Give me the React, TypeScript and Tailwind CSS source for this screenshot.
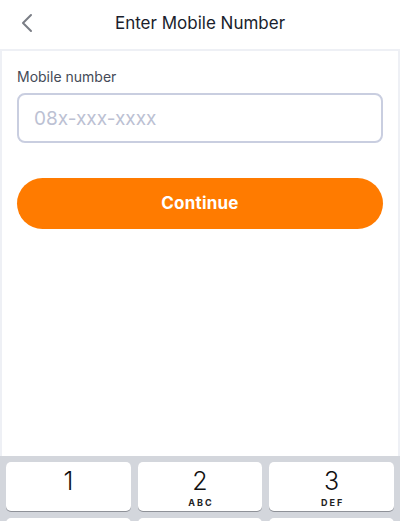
import React from "react";

const keys = [
  { d: "1", l: "" },
  { d: "2", l: "ABC" },
  { d: "3", l: "DEF" },
];

export default function App() {
  return (
    <div
      className="w-[400px] h-[521px] bg-white flex flex-col overflow-hidden"
      style={{ fontFamily: "Inter, 'Noto Sans', sans-serif" }}
    >
      <div className="h-[49px] shrink-0 relative flex items-center justify-center">
        <svg
          className="absolute left-[20px] top-[13px]"
          width="14"
          height="20"
          viewBox="0 0 14 20"
          fill="none"
        >
          <path d="M11 2 L3 10 L11 18" stroke="#7a7d85" strokeWidth="2" strokeLinecap="round" strokeLinejoin="round" />
        </svg>
        <span className="text-[17px] text-[#1a1e2c] leading-none mt-[-3px]">Enter Mobile Number</span>
      </div>
      <div className="flex-1 border-t-2 border-x-2 border-[#eef0f5] px-[15px] pt-[19px]">
        <div className="text-[14px] text-[#454a57] leading-none">Mobile number</div>
        <div className="mt-[9px] h-[50px] rounded-[8px] border-2 border-[#c9cee0] flex items-center pl-[15px]">
          <span className="text-[19px] text-[#bcc1d3] leading-none">08x-xxx-xxxx</span>
        </div>
        <div className="mt-[35px] h-[51px] rounded-full bg-[#ff7b00] flex items-center justify-center">
          <span className="text-[17px] font-bold text-white leading-none tracking-[0.2px]">Continue</span>
        </div>
      </div>
      <div className="h-[65px] shrink-0 bg-[#d3d6dc] px-[6px] pt-[6px] grid grid-cols-3 gap-x-[7px] gap-y-[7px] content-start">
        {keys.map((k) => (
          <div
            key={k.d}
            className="h-[49px] bg-white rounded-[5px] shadow-[0_1px_0_#8e9198] flex flex-col items-center pt-[6px]"
          >
            <span className="text-[25px] leading-[26px] text-[#111] font-light">{k.d}</span>
            {k.l && (
              <span className="text-[9px] font-bold tracking-[2px] text-[#222] leading-none mt-[4px] pl-[2px]">
                {k.l}
              </span>
            )}
          </div>
        ))}
        <div className="h-[49px] bg-white rounded-[5px]" />
        <div className="h-[49px] bg-white rounded-[5px]" />
        <div className="h-[49px] bg-white rounded-[5px]" />
      </div>
    </div>
  );
}
